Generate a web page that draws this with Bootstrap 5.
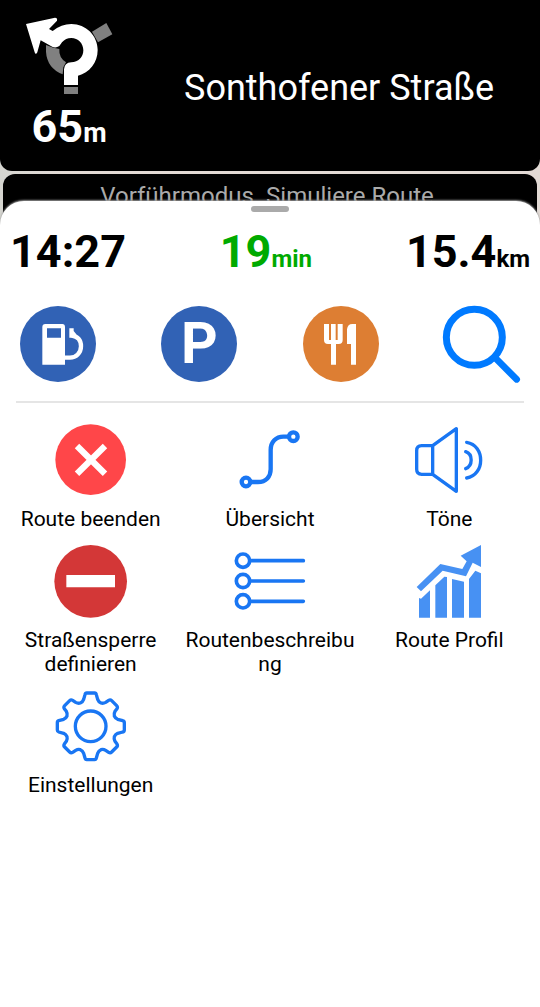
<!DOCTYPE html>
<html lang="de">
<head>
<meta charset="utf-8">
<meta name="viewport" content="width=device-width, initial-scale=1">
<title>Navigation</title>
<link href="https://cdn.jsdelivr.net/npm/bootstrap@5.3.0/dist/css/bootstrap.min.css" rel="stylesheet">
<style>
  body { font-family: Roboto, "Liberation Sans", sans-serif; color: #000; background: linear-gradient(90deg, #d5d5d0, #e2dad5 12%, #e2dad5); }
  .maneuver { border-radius: 0 0 12px 12px; padding: 16px 0 12px; }
  .maneuver-side { width: 138px; }
  .turn-icon { width: 90px; height: 80px; margin-bottom: 5px; }
  .street { font-size: 36px; line-height: 44px; font-weight: 400; }
  .figure-lg { font-size: 45px; line-height: 52px; font-weight: 700; }
  .unit { font-size: 24px; }
  .unit-head { font-size: 27px; }
  .notice { margin: 3px 3px 0; height: 56px; padding: 8px 6px 0 0; border-radius: 12px; font-size: 24px; line-height: 28px; color: #aaa; }
  .sheet { margin-top: -29px; border-radius: 24px 24px 0 0; box-shadow: 0 -1px 2px #999; }
  .grip { width: 38px; height: 6px; margin-top: 5px; background: #aaa; }
  .stats { padding: 0 10px; margin-top: 14px; }
  .eta { color: #0a0; }
  .quick { padding: 0 20px; margin-top: 21px; }
  .quick .btn { width: 76px; height: 76px; }
  .quick svg { overflow: visible; }
  .blue { background: #3162b5; }
  .orange { background: #dd7e33; }
  .parking { font-size: 57px; line-height: 76px; font-weight: 700; }
  .rule { height: 2px; margin: 19px 16px 0; background: #e5e5e5; }
  .menu { margin: 21px 1px 0; row-gap: 14px; }
  .tile { font-size: 21px; line-height: 24px; padding: 0 4px; color: #000; overflow-wrap: anywhere; }
  .tile svg { width: 72px; height: 72px; margin-bottom: 11px; }
  .line-art { fill: none; stroke: #1976f3; stroke-linecap: round; stroke-linejoin: round; }
</style>
<script src="https://cdn.jsdelivr.net/npm/bootstrap@5.3.0/dist/js/bootstrap.bundle.min.js"></script>
</head>
<body class="d-flex flex-column min-vh-100">
<header class="maneuver bg-black text-white d-flex align-items-center">
  <div class="maneuver-side d-flex flex-column align-items-center flex-shrink-0">
    <svg class="turn-icon" viewBox="72 48 270 240" role="img" aria-label="Kreisverkehr">
      <g fill="#808080"><path d="M276 95 319 69 337 103 294 127Z"/><path d="M192 261H234V282H192Z"/><path d="M138 135V155Q141 204 188 223L190 202 198 187Q176 173 178 147L160 143Z"/></g>
      <path fill="#fff" d="M78 72 165 53Q173 53 171 62L147 87 158 93Q184 72 214 72C258 72 293 107 293 150C293 188 268 219 234 227V255H192V208Q193 188 214 187C235 187 250 171 250 151C250 130 234 114 214 114Q197 114 186 127L178 138Q168 145 158 141L122 121 112 157Q107 166 104 157Z"/>
    </svg>
    <div class="figure-lg">65<span class="unit-head">m</span></div>
  </div>
  <h1 class="street flex-grow-1 text-center m-0">Sonthofener Straße</h1>
</header>
<div class="notice bg-black text-center">Vorführmodus. Simuliere Route</div>
<main class="sheet bg-white flex-grow-1 d-flex flex-column position-relative">
  <div class="grip rounded-pill align-self-center"></div>
  <div class="stats d-flex justify-content-between figure-lg">
    <div>14:27</div>
    <div class="eta">19<span class="unit">min</span></div>
    <div>15.4<span class="unit">km</span></div>
  </div>
  <div class="quick d-flex justify-content-between">
    <button type="button" class="btn blue rounded-circle border-0 p-0 d-flex" aria-label="Tankstelle">
      <svg viewBox="60 48 228 228"><path fill="#fff" fill-rule="evenodd" d="M127 224V111Q127 102 136 102H187Q195 102 195 111V224ZM141 115V143H183V115Z"/><path d="M194 203H210C228 203 243 189 243 169C243 149 231 139 215 137" fill="none" stroke="#fff" stroke-width="13"/><path fill="#fff" d="M208 115H221V123L229 133V143H208Z"/></svg>
    </button>
    <button type="button" class="btn blue text-white rounded-circle border-0 p-0 parking" aria-label="Parkplatz">P</button>
    <button type="button" class="btn orange rounded-circle border-0 p-0 d-flex" aria-label="Restaurant">
      <svg viewBox="96 48 228 228"><path fill="#fff" d="M159 102H174V150H180V102H194V150H200V102H215V150Q215 162 203 162H195V224H180V162H171Q159 162 159 150ZM255 102V224H240V162H228V118Q230 102 244 102Z"/></svg>
    </button>
    <button type="button" class="btn border-0 p-0 d-flex" aria-label="Suchen">
      <svg viewBox="522 48 228 228" fill="none" stroke="#007aff" stroke-linecap="round"><circle cx="613" cy="142" r="84" stroke-width="21"/><path d="M678 206 740 268" stroke-width="20"/></svg>
    </button>
  </div>
  <div class="rule"></div>
  <div class="menu row g-0">
    <div class="col-4"><button type="button" class="tile btn border-0 w-100 d-flex flex-column align-items-center">
      <svg viewBox="75 42 216 216"><circle cx="182" cy="149" r="106" fill="#ff4649"/><path d="M141 108 225 191M225 108 141 191" stroke="#fff" stroke-width="19"/></svg>
      <span>Route beenden</span></button></div>
    <div class="col-4"><button type="button" class="tile btn border-0 w-100 d-flex flex-column align-items-center">
      <svg class="line-art" viewBox="42 42 216 216" stroke-width="13"><circle cx="78" cy="216" r="13"/><circle cx="220" cy="80" r="13"/><path d="M94 216H114C138 216 152 200 152 178V120C152 96 168 80 190 80H204"/></svg>
      <span>Übersicht</span></button></div>
    <div class="col-4"><button type="button" class="tile btn border-0 w-100 d-flex flex-column align-items-center">
      <svg class="line-art" viewBox="69 42 216 216" stroke-width="10"><path d="M128 107H95Q80 107 80 122V178Q80 193 95 193H128ZM128 107 199 56V244L128 193"/><path d="M230 97C286 106 286 195 230 204M227 125C249 132 249 168 227 176"/></svg>
      <span>Töne</span></button></div>
    <div class="col-4"><button type="button" class="tile btn border-0 w-100 d-flex flex-column align-items-center">
      <svg viewBox="75 30 216 216" overflow="visible"><circle cx="182" cy="139" r="109" fill="#d33737"/><path fill="#fff" d="M109 120H255V157H109Z"/></svg>
      <span>Straßensperre definieren</span></button></div>
    <div class="col-4"><button type="button" class="tile btn border-0 w-100 d-flex flex-column align-items-center">
      <svg class="line-art" viewBox="72 30 216 216" stroke-width="11"><circle cx="99" cy="77" r="20"/><circle cx="99" cy="138" r="20"/><circle cx="99" cy="199" r="20"/><path d="M122 77H280M122 138H280M122 199H280"/></svg>
      <span>Routenbeschreibung</span></button></div>
    <div class="col-4"><button type="button" class="tile btn border-0 w-100 d-flex flex-column align-items-center">
      <svg viewBox="69 30 216 216" overflow="visible" fill="#4791f3"><path d="M80 156 151 87 217 102 230 79 212 62 273 30V96L248 83 228 124 158 107 93 169ZM87 248V189L93 191 120 166V248ZM136 248V151L163 125 171 126V248ZM186 248V132L222 140V248ZM237 248V132L256 107 273 115V248Z"/></svg>
      <span>Route Profil</span></button></div>
    <div class="col-4"><button type="button" class="tile btn border-0 w-100 d-flex flex-column align-items-center">
      <svg class="line-art" viewBox="75 33 216 216" stroke-width="10"><circle cx="182" cy="142" r="46"/><path d="M170 42H194Q198 42 199 47L203 61Q206 69 213 72Q220 74 227 70L236 64Q241 61 245 65L260 80Q264 84 261 89L255 97Q251 104 253 111Q256 118 263 121L278 125Q283 126 283 131V153Q283 158 278 159L263 163Q256 166 253 173Q251 180 255 187L261 195Q264 200 260 204L245 219Q241 223 236 220L227 214Q220 210 213 212Q206 215 203 223L199 237Q198 242 194 242H170Q166 242 165 237L161 223Q158 215 151 212Q144 210 137 214L128 220Q123 223 119 219L104 204Q100 200 103 195L109 187Q113 180 111 173Q108 166 101 163L86 159Q82 158 82 153V131Q82 126 86 125L101 121Q108 118 111 111Q113 104 109 97L103 89Q100 84 104 80L119 65Q123 61 128 64L137 70Q144 74 151 72Q158 69 161 61L165 47Q166 42 170 42Z"/></svg>
      <span>Einstellungen</span></button></div>
  </div>
</main>
</body>
</html>
